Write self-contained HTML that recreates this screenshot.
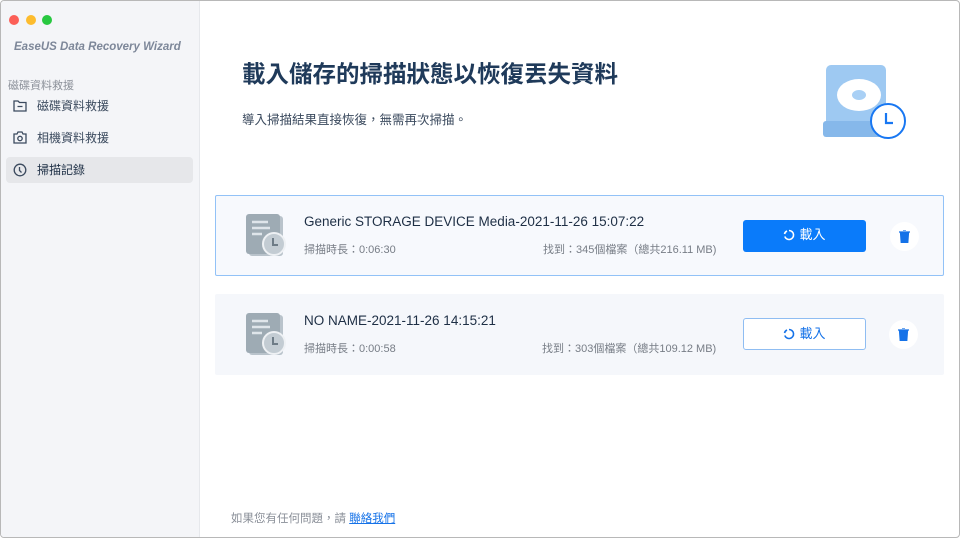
<!DOCTYPE html>
<html><head><meta charset="utf-8"><style>
*{margin:0;padding:0;box-sizing:border-box}
body{width:960px;height:538px;overflow:hidden;background:#fff;font-family:"Liberation Sans","Noto Sans CJK TC",sans-serif;position:relative}
.win{position:absolute;left:0;top:0;width:960px;height:538px;border:1px solid #b8b8b8;border-radius:4px;overflow:hidden}
.side{position:absolute;left:-1px;top:-1px;width:200px;height:540px;background:#f4f5f8;border-right:1px solid #e6e8ec}
.dot{position:absolute;top:15px;width:10px;height:10px;border-radius:50%}
.abs{position:absolute;white-space:nowrap}
.nav{position:absolute;left:6px;width:187px;height:26px;border-radius:4px;font-size:12px;color:#3b4a5e}
.nav span{position:absolute;left:31px;top:4px}
.nav svg{position:absolute;left:7px;top:6px}
.card{position:absolute;left:214px;width:729px;height:81px;border-radius:2px}
.t{position:absolute;left:88px;top:18px;font-size:13.5px;color:#1e2f45}
.s{position:absolute;top:45px;font-size:11px;color:#777d86}
.btn{position:absolute;left:527px;top:24px;width:123px;height:32px;border-radius:3px;font-size:13px;text-align:center;line-height:30px}
.btn svg{vertical-align:-2px;margin-right:4px}
.trash{position:absolute;left:674px;top:26px;width:29px;height:29px;border-radius:50%;background:#fff}
</style></head><body><div class="win">
<div class="side">
<div class="dot" style="left:9px;background:#fc5f57"></div>
<div class="dot" style="left:26px;background:#fdbc2e"></div>
<div class="dot" style="left:42px;background:#28c840"></div>
<div class="abs" style="left:14px;top:41px;font-size:11.5px;font-style:italic;font-weight:bold;color:#7d8799">EaseUS Data Recovery Wizard</div>
<div class="abs" style="left:8px;top:77px;font-size:11px;color:#8a8f98">磁碟資料救援</div>
<div class="nav" style="top:93px"><svg width="14" height="13" viewBox="0 0 14 13"><path d="M1 2h4l1.5 1.5H13v8.5H1z" fill="none" stroke="#3b4a5e" stroke-width="1.3"/><path d="M4.5 7.5h5" stroke="#3b4a5e" stroke-width="1.3"/></svg><span>磁碟資料救援</span></div>
<div class="nav" style="top:125px"><svg width="14" height="13" viewBox="0 0 14 13"><path d="M1 3h3l1-2h4l1 2h3v9H1z" fill="none" stroke="#3b4a5e" stroke-width="1.3"/><circle cx="7" cy="7.5" r="2.2" fill="none" stroke="#3b4a5e" stroke-width="1.3"/></svg><span>相機資料救援</span></div>
<div class="nav" style="top:157px;background:#e6e7ea;color:#1e2f45"><svg width="14" height="14" viewBox="0 0 14 14"><circle cx="7" cy="7" r="5.8" fill="none" stroke="#3b4a5e" stroke-width="1.3"/><path d="M6.5 4v3.5l2 2" fill="none" stroke="#3b4a5e" stroke-width="1.3"/></svg><span>掃描記錄</span></div>
</div>
<div class="abs" style="left:241px;top:54px;font-size:23.5px;font-weight:bold;color:#1f3a5a">載入儲存的掃描狀態以恢復丟失資料</div>
<div class="abs" style="left:241px;top:108px;font-size:12.5px;color:#3b4a5e">導入掃描結果直接恢復，無需再次掃描。</div>
<svg class="abs" style="left:820px;top:62px" width="90" height="80" viewBox="0 0 90 80"><rect x="5" y="2" width="60" height="68" rx="5" fill="#9ec9f2"/><rect x="2" y="58" width="66" height="16" rx="3" fill="#86b8ea"/><ellipse cx="38" cy="32" rx="22" ry="16" fill="#fff"/><ellipse cx="38" cy="32" rx="7" ry="5" fill="#a9d0f5"/><circle cx="67" cy="58" r="17" fill="#fff" stroke="#1877f2" stroke-width="2"/><path d="M65 50v10h7" fill="none" stroke="#1877f2" stroke-width="2.2"/></svg>
<div class="card" style="top:194px;background:#f7f9fd;border:1px solid #92c2f7">
<svg class="abs" style="left:29px;top:18px" width="44" height="44" viewBox="0 0 44 44"><rect x="4" y="2" width="34" height="40" rx="3" fill="#b9c3cb"/><rect x="1" y="0" width="34" height="40" rx="3" fill="#9eabb4"/><path d="M7 8h16M7 14h18M7 20h10" stroke="#dfe5ea" stroke-width="2.5"/><circle cx="29" cy="30" r="11" fill="#c3ccd3" stroke="#eef1f4" stroke-width="2"/><path d="M28 24v7h5" fill="none" stroke="#6e7c87" stroke-width="2"/></svg>
<div class="t">Generic STORAGE DEVICE Media-2021-11-26 15:07:22</div>
<div class="s" style="left:88px">掃描時長：0:06:30</div>
<div class="s" style="left:327px">找到：345個檔案（總共216.11 MB)</div>
<div class="btn" style="background:#0a7bfa;color:#fff"><svg width="12" height="12" viewBox="0 0 12 12"><path d="M6 1.5A4.5 4.5 0 1 1 1.8 7.5M1.5 5A4.5 4.5 0 0 1 4 2" fill="none" stroke="#fff" stroke-width="1.6"/></svg>載入</div>
<div class="trash"><svg style="position:absolute;left:9px;top:8px" width="11" height="13" viewBox="0 0 11 13"><path d="M0 2h11M4 0h3M1.5 3h8l-.7 9.5H2.2z" fill="#1572e8" stroke="#1572e8" stroke-width="1.2"/></svg></div>
</div>
<div class="card" style="top:293px;background:#f5f7fb">
<svg class="abs" style="left:30px;top:19px" width="44" height="44" viewBox="0 0 44 44"><rect x="4" y="2" width="34" height="40" rx="3" fill="#b9c3cb"/><rect x="1" y="0" width="34" height="40" rx="3" fill="#9eabb4"/><path d="M7 8h16M7 14h18M7 20h10" stroke="#dfe5ea" stroke-width="2.5"/><circle cx="29" cy="30" r="11" fill="#c3ccd3" stroke="#eef1f4" stroke-width="2"/><path d="M28 24v7h5" fill="none" stroke="#6e7c87" stroke-width="2"/></svg>
<div class="t" style="left:89px;top:19px">NO NAME-2021-11-26 14:15:21</div>
<div class="s" style="left:89px;top:46px">掃描時長：0:00:58</div>
<div class="s" style="left:327px;top:46px">找到：303個檔案（總共109.12 MB)</div>
<div class="btn" style="left:528px;background:#fff;color:#1572e8;border:1px solid #8fbdf2"><svg width="12" height="12" viewBox="0 0 12 12"><path d="M6 1.5A4.5 4.5 0 1 1 1.8 7.5M1.5 5A4.5 4.5 0 0 1 4 2" fill="none" stroke="#1572e8" stroke-width="1.6"/></svg>載入</div>
<div class="trash"><svg style="position:absolute;left:9px;top:8px" width="11" height="13" viewBox="0 0 11 13"><path d="M0 2h11M4 0h3M1.5 3h8l-.7 9.5H2.2z" fill="#1572e8" stroke="#1572e8" stroke-width="1.2"/></svg></div>
</div>
<div class="abs" style="left:230px;top:509px;font-size:11.5px;color:#8a8f98">如果您有任何問題，請 <span style="color:#1572e8;text-decoration:underline">聯絡我們</span></div>
</div></body></html>
